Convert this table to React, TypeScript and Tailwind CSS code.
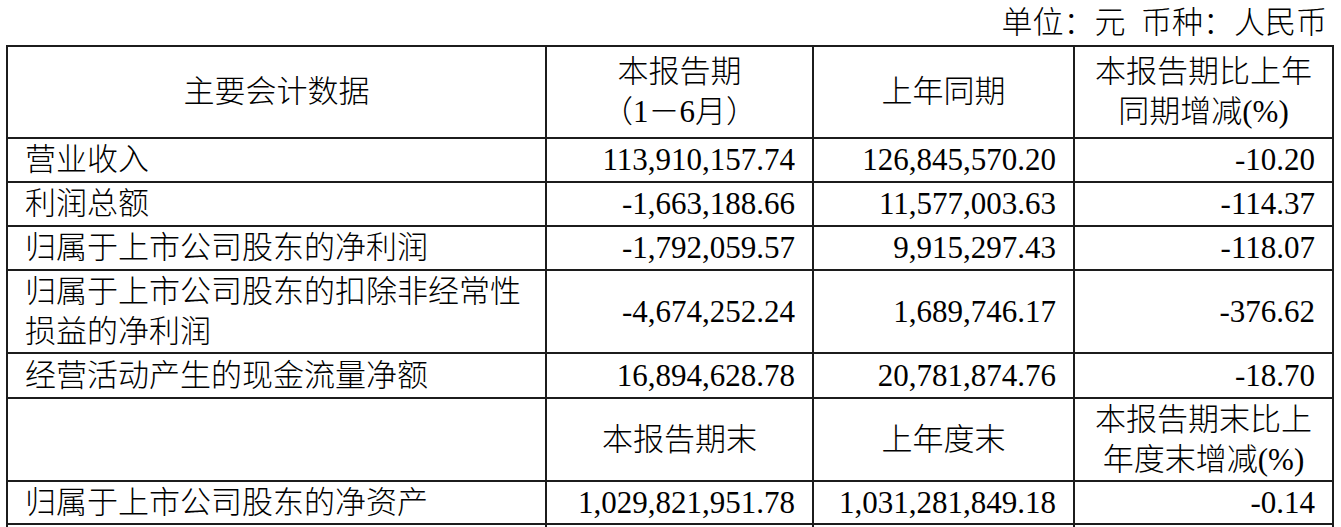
const rows: { label: string[]; a: string; b: string; c: string; h: string }[] = [
  { label: ['营业收入'], a: '113,910,157.74', b: '126,845,570.20', c: '-10.20', h: 'h-[44px]' },
  { label: ['利润总额'], a: '-1,663,188.66', b: '11,577,003.63', c: '-114.37', h: 'h-[44px]' },
  { label: ['归属于上市公司股东的净利润'], a: '-1,792,059.57', b: '9,915,297.43', c: '-118.07', h: 'h-[44px]' },
  {
    label: ['归属于上市公司股东的扣除非经常性', '损益的净利润'],
    a: '-4,674,252.24',
    b: '1,689,746.17',
    c: '-376.62',
    h: 'h-[83px]',
  },
  { label: ['经营活动产生的现金流量净额'], a: '16,894,628.78', b: '20,781,874.76', c: '-18.70', h: 'h-[45px]' },
];

const cell = 'border-2 border-[#1c1c1c] px-[17px] align-middle';

function Lines({ lines }: { lines: string[] }) {
  return (
    <>
      {lines.map((l) => (
        <div key={l}>{l}</div>
      ))}
    </>
  );
}

export default function App() {
  return (
    <div
      className="min-h-screen bg-white font-light text-black"
      style={{ fontFamily: '"Liberation Serif", "Noto Sans CJK SC", serif' }}
    >
      <div className="flex h-[45px] items-center justify-end pr-[14px] text-[31px] leading-[40px]">
        单位：元&nbsp;&nbsp;币种：人民币
      </div>
      <table className="ml-[6px] w-[1326px] table-fixed border-collapse text-[31px] leading-[40px]">
        <colgroup>
          <col className="w-[539px]" />
          <col className="w-[267px]" />
          <col className="w-[261px]" />
          <col className="w-[259px]" />
        </colgroup>
        <tbody>
          <tr className="h-[92px]">
            <td className={`${cell} text-center`}>主要会计数据</td>
            <td className={`${cell} text-center`}>
              <Lines lines={['本报告期', '（1－6月）']} />
            </td>
            <td className={`${cell} text-center`}>上年同期</td>
            <td className={`${cell} text-center`}>
              <Lines lines={['本报告期比上年', '同期增减(%)']} />
            </td>
          </tr>
          {rows.map((r) => (
            <tr key={r.a} className={r.h}>
              <td className={`${cell} text-left`}>
                <Lines lines={r.label} />
              </td>
              <td className={`${cell} text-right`}>{r.a}</td>
              <td className={`${cell} text-right`}>{r.b}</td>
              <td className={`${cell} text-right`}>{r.c}</td>
            </tr>
          ))}
          <tr className="h-[83px]">
            <td className={cell}></td>
            <td className={`${cell} text-center`}>本报告期末</td>
            <td className={`${cell} text-center`}>上年度末</td>
            <td className={`${cell} text-center`}>
              <Lines lines={['本报告期末比上', '年度末增减(%)']} />
            </td>
          </tr>
          <tr className="h-[43px]">
            <td className={`${cell} text-left`}>归属于上市公司股东的净资产</td>
            <td className={`${cell} text-right`}>1,029,821,951.78</td>
            <td className={`${cell} text-right`}>1,031,281,849.18</td>
            <td className={`${cell} text-right`}>-0.14</td>
          </tr>
          <tr className="h-[44px]">
            <td className={cell}></td>
            <td className={cell}></td>
            <td className={cell}></td>
            <td className={cell}></td>
          </tr>
        </tbody>
      </table>
    </div>
  );
}
